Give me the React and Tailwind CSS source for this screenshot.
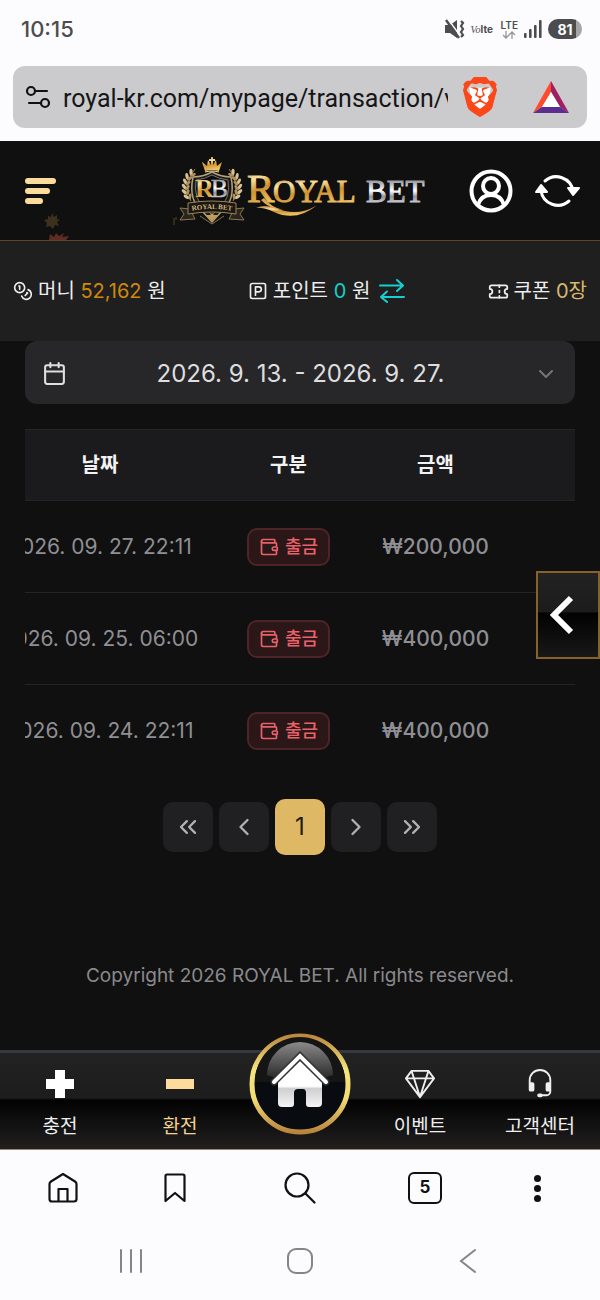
import React, { useState } from "react";
import {
  Bookmark,
  Calendar,
  ChevronDown,
  ChevronLeft,
  ChevronRight,
  ChevronsLeft,
  ChevronsRight,
  Coins,
  Search,
  SquareParking,
  Ticket,
  Wallet,
} from "lucide-react";
import { BsGem, BsHeadset } from "react-icons/bs";
import { SiBrave } from "react-icons/si";

const SANS = "font-['Inter','Noto_Sans_CJK_KR',sans-serif]";

const ROWS = [
  { date: "2026. 09. 27. 22:11", type: "출금", amount: "₩200,000" },
  { date: "2026. 09. 25. 06:00", type: "출금", amount: "₩400,000" },
  { date: "2026. 09. 24. 22:11", type: "출금", amount: "₩400,000" },
];

export default function App() {
  return (
    <div className={`flex min-h-screen flex-col bg-[#fcfcfe] ${SANS}`}>
      <StatusBar />
      <AddressBar />
      <div className="relative flex grow flex-col bg-[#101010]">
        <SiteHeader />
        <BalanceBar />
        <main className="px-[25px]">
          <DateRange />
          <Transactions />
          <Pager />
        </main>
        <footer className="mt-[107px] pb-14 text-center text-[19px] leading-7 text-[#8a8a8c]">
          Copyright 2026 ROYAL BET. All rights reserved.
        </footer>
        <SiteNav />
        <button
          aria-label="Open side panel"
          className="absolute top-[430px] right-0 flex h-[88px] w-16 items-center justify-center border-2 border-[#866228] bg-[linear-gradient(#222_0%,#1c1c1c_46%,#020202_48%,#181818_100%)] pr-3"
        >
          <svg viewBox="0 0 24 40" className="h-10 w-6" fill="none" stroke="#fff" strokeWidth="6">
            <path d="M21 3 4 20l17 17" />
          </svg>
        </button>
      </div>
      <BrowserNav />
      <SystemNav />
    </div>
  );
}

function StatusBar() {
  return (
    <div className="flex h-[66px] items-center justify-between pr-[18px] pb-2 pl-[21px] text-[#4c4c4e]">
      <span className="text-[22px] font-medium">10:15</span>
      <div className="flex items-center gap-[6px]">
        {/* muted + vibrate */}
        <svg viewBox="0 0 20 20" className="h-5 w-5" fill="currentColor">
          <path d="M0 6h5l7-5v18l-7-5H0z" />
          <path d="M3 0 16 18" stroke="#fcfcfe" strokeWidth="1.500" />
          <path d="m1 1 13 18" stroke="currentColor" strokeWidth="2.400" />
          <path d="m16 2 2 2-2 3 2 3-2 3 2 3-2 2" fill="none" stroke="currentColor" strokeWidth="2.200" />
        </svg>
        <span className="w-6 text-[10px] font-bold">
          <i className="font-['Liberation_Serif',serif] font-normal">Vo</i>lte
        </span>
        <div className="flex flex-col items-center">
          <span className="text-[10px] leading-[11px] font-semibold">LTE</span>
          <svg viewBox="0 0 14 8" className="h-2 w-[14px]" fill="none" stroke="#97979a" strokeWidth="1.300">
            <path d="M4 0v7M1 4l3 3 3-3M10 8V1M7 4l3-3 3 3" />
          </svg>
        </div>
        <svg viewBox="0 0 18 18" className="h-[18px] w-[18px]" fill="currentColor">
          <rect x="0" y="13" width="2.600" height="5" rx="1" />
          <rect x="5" y="9" width="2.600" height="9" rx="1" />
          <rect x="10" y="5" width="2.600" height="13" rx="1" />
          <rect x="15" y="0" width="2.600" height="18" rx="1" />
        </svg>
        <span className="flex h-5 w-[34px] items-center justify-center rounded-full bg-[linear-gradient(90deg,#4c4c4e_82%,#a5a5a8_82%)] text-[14px] font-bold text-white">
          81
        </span>
      </div>
    </div>
  );
}

function AddressBar() {
  return (
    <div className="mx-[13px] mb-[13px] flex h-[62px] items-center rounded-xl bg-[#cbcbcd] pr-[18px] pl-3">
      <svg viewBox="0 0 26 24" className="h-6 w-[26px] shrink-0" fill="none" stroke="#111" strokeWidth="2.200">
        <circle cx="6" cy="6" r="4" />
        <path d="M10 6h12M4 18h12" strokeLinecap="round" />
        <circle cx="20" cy="18" r="4" />
      </svg>
      <input
        aria-label="Address"
        defaultValue="royal-kr.com/mypage/transaction/v"
        className="ml-3 w-0 grow bg-transparent pt-[3px] font-['Roboto',sans-serif] text-[25px] text-[#161617] outline-none"
      />
      <button aria-label="Shields" className="ml-3 grid h-11 w-9 place-items-center">
        <svg viewBox="0 0 24 24" className="col-start-1 row-start-1 h-8 w-8" fill="#fff">
          <path d="M4 5h16l-2 12-6 5-6-5z" />
        </svg>
        <SiBrave className="col-start-1 row-start-1 h-10 w-10 text-[#fb4719]" />
      </button>
      <button aria-label="Rewards" className="ml-[37px]">
        <svg viewBox="0 0 36 32" className="h-8 w-9">
          <path d="M18 0 0 32l9-6 9-15z" fill="#ff4b2b" />
          <path d="M18 0v11l9 15 9 6z" fill="#9e1f63" />
          <path d="M0 32h36l-9-6H9z" fill="#5b2d90" />
          <path d="m18 11-9 15h18z" fill="#fff" />
        </svg>
      </button>
    </div>
  );
}

function SiteHeader() {
  return (
    <header className="relative grid h-[100px] grid-cols-[1fr_auto_1fr] items-center border-b border-[#5e4426] px-5">
      <button aria-label="Menu" className="ml-[5px] flex w-8 flex-col gap-1">
        <span className="h-[6px] w-[31px] rounded-full bg-[#fbdc9c]" />
        <span className="h-[6px] w-[25px] rounded-full bg-[#fbdc9c]" />
        <span className="h-[6px] w-[18px] rounded-full bg-[#fbdc9c]" />
      </button>
      <Logo />
      <div className="flex items-center justify-end gap-[21px]">
        <button aria-label="Account">
          <svg viewBox="0 0 44 44" className="h-11 w-11" fill="none" stroke="#fff" strokeWidth="4">
            <circle cx="22" cy="22" r="19.500" />
            <circle cx="22" cy="17" r="8" />
            <path d="M9 36c2-7 7-10 13-10s11 3 13 10" />
          </svg>
        </button>
        <button aria-label="Refresh">
          <svg viewBox="0 0 46 38" className="h-[38px] w-[46px]" fill="none" stroke="#fff" strokeWidth="3" strokeLinecap="round">
            <path d="M11 9a17 17 0 0 1 28 10M35 29A17 17 0 0 1 7 19" />
            <path d="m7 13-5 7h11zM39 23l-5-7h11z" fill="#fff" strokeWidth="2" strokeLinejoin="round" />
          </svg>
        </button>
      </div>
      {/* falling leaves */}
      <svg viewBox="0 0 30 27" className="absolute bottom-0 left-11 h-[27px] w-[30px]">
        <path d="m8 0 2 4 3-2v4l3 1-3 2 2 4-4-1-2 4-3-3-4 1 1-4-3-3 4-1V3l3 1z" fill="#3e301e" />
        <path d="m5 27 1-6 4 3 2-4 3 3 5-3-2 4 7-1-3 4z" fill="#602b23" />
      </svg>
    </header>
  );
}

// laurel leaves of the left side, mirrored for the right one
const LEAVES = [
  [20, 16, 35],
  [16, 20, 25],
  [14, 25, 10],
  [13, 30, 0],
  [13, 35, -12],
  [15, 40, -25],
];

function Laurel() {
  return (
    <g>
      <path d="M23 13Q11 27 19 45" fill="none" stroke="#9b7c45" strokeWidth="1" />
      {LEAVES.map(([x, y, r]) => (
        <g key={y} transform={`rotate(${r} ${x} ${y})`}>
          <ellipse cx={x - 1} cy={y} rx="1.600" ry="3.200" transform={`rotate(-35 ${x} ${y})`} fill="#d8c396" />
          <ellipse cx={x + 3} cy={y} rx="1.500" ry="3" transform={`rotate(35 ${x} ${y})`} fill="#b0935c" />
        </g>
      ))}
    </g>
  );
}

function Logo() {
  return (
    <a href="#home" aria-label="Royal Bet">
      <svg viewBox="0 -1 256 72" className="h-[72px] w-64 font-['Liberation_Serif',serif]">
        <defs>
          <linearGradient id="gold" x1="0" y1="0" x2="0.300" y2="1">
            <stop offset="0" stopColor="#a8742a" />
            <stop offset="0.350" stopColor="#fbe3a0" />
            <stop offset="0.600" stopColor="#d0932f" />
            <stop offset="1" stopColor="#f0c468" />
          </linearGradient>
          <linearGradient id="silver" x1="0" y1="0" x2="0" y2="1">
            <stop offset="0.200" stopColor="#9a9ba0" />
            <stop offset="0.480" stopColor="#ffffff" />
            <stop offset="0.650" stopColor="#94959a" />
            <stop offset="0.850" stopColor="#d6d7da" />
          </linearGradient>
        </defs>
        <Laurel />
        <g transform="translate(80 0) scale(-1 1)">
          <Laurel />
        </g>
        <path d="M21 21q10 0 19-5 9 5 19 5 5 24-10 35l-9 10-9-10q-15-11-10-35z" fill="#19191a" stroke="#b5a277" strokeWidth="1.500" />
        <path d="M24 24q9-1 16-5 7 4 16 5 3 20-10 29l-6 6-6-6q-13-9-10-29z" fill="#0d0d0e" stroke="#77736a" strokeWidth="1" />
        <path d="m33 15-3-9 5 4 1-6 3 5V5h-2V3h2V1h2v2h2v2h-2v4l3-5 1 6 5-4-3 9q-7-2-14 0z" fill="url(#gold)" />
        <path d="M33 16q7-2 14 0" fill="none" stroke="#f4dfa9" strokeWidth="1.200" />
        <text x="23" y="41" fontSize="26">
          <tspan fill="url(#gold)" fontWeight="bold">R</tspan>
          <tspan dx="-3" fill="url(#silver)" stroke="url(#silver)" strokeWidth="0.500">B</tspan>
        </text>
        <path d="M18 53 8 52l4 6-4 6 15-1zM62 53l10-1-4 6 4 6-15-1z" fill="#29251e" stroke="#8c7650" strokeWidth="1" />
        <path d="M16 47q24-4 48 0v11q-24-4-48 0z" fill="#1b1813" stroke="#9c8457" strokeWidth="1" />
        <path id="ribbon" d="M18 55q22-4 44 0" fill="none" />
        <text fontSize="7" fontWeight="bold" fill="#d3b980">
          <textPath href="#ribbon" startOffset="50%" textAnchor="middle">ROYAL BET</textPath>
        </text>
        <path d="m40 57 2 2 4 0-3 3-3 3-3-3-3-3h4z" fill="#c59c55" />
        <path d="m28 60 12 8 12-8" fill="none" stroke="#8a744d" strokeWidth="1" />
        <path d="M2 62v7M4 61v3" stroke="#594426" strokeWidth="1" />
        <g fill="url(#gold)" stroke="url(#gold)" strokeWidth="1">
          <text x="75" y="46" fontSize="41">R</text>
          <text x="101" y="46" fontSize="31">OYAL</text>
        </g>
        <text x="194" y="46" fontSize="31" fill="url(#silver)" stroke="url(#silver)" strokeWidth="1">BET</text>
        <path d="M84 52q8-4 19 0 22 9 41-2-20 16-42 6-11-5-18-4z" fill="url(#gold)" />
        <path d="M92 42q7 9 19 12-14-1-22-10z" fill="#dca64a" />
      </svg>
    </a>
  );
}

function BalanceBar() {
  return (
    <div className="flex h-[100px] items-center justify-between bg-[#1f1f1f] px-[13px] text-[20px] text-[#eee]">
      <div className="flex items-center gap-[5px]">
        <Coins size={20} strokeWidth={2} />
        <span>
          머니 <span className="text-[#cf880d]">52,162</span> 원
        </span>
      </div>
      <div className="flex items-center gap-[5px]">
        <SquareParking size={20} strokeWidth={2} />
        <span>
          포인트 <span className="text-[#17cfc9]">0</span> 원
        </span>
        <button aria-label="Convert points" className="ml-1">
          <svg viewBox="0 0 26 24" className="h-6 w-[26px]" fill="none" stroke="#17cfd0" strokeWidth="2" strokeLinecap="round" strokeLinejoin="round">
            <path d="M1 6.500h23M18 1l6 5.500-6 5.500M25 18H2M8 12.500 2 18l6 5" />
          </svg>
        </button>
      </div>
      <div className="flex items-center gap-[5px]">
        <Ticket size={21} strokeWidth={2} />
        <span>
          쿠폰 <span className="text-[#d9b96c]">0장</span>
        </span>
      </div>
    </div>
  );
}

function DateRange() {
  return (
    <button className="flex h-[63px] w-full items-center justify-between rounded-xl bg-[#27272a] px-[17px] pt-[2px] text-[24px] text-[#dededf]">
      <Calendar size={25} strokeWidth={2} />
      <span>2026. 9. 13. - 2026. 9. 27.</span>
      <ChevronDown size={24} strokeWidth={2} className="text-[#757578]" />
    </button>
  );
}

function Transactions() {
  return (
    <div className="mt-[25px] overflow-hidden">
      {/* scrolled a little to the right, the first column is cut off */}
      <table className="-ml-8 w-[calc(100%+32px)] table-fixed text-center whitespace-nowrap">
        <colgroup>
          <col className="w-[214px]" />
          <col className="w-[163px]" />
          <col className="w-[131px]" />
          <col />
        </colgroup>
        <thead>
          <tr className="h-[71px] border-y border-[#242427] bg-[#1b1b1d] text-[20px] text-[#f2f2f3]">
            <th className="font-bold">날짜</th>
            <th className="font-bold">구분</th>
            <th className="font-bold">금액</th>
            <td></td>
          </tr>
        </thead>
        <tbody className="text-[21px] text-[#8f8f94]">
          {ROWS.map((row) => (
            <tr key={row.date} className="h-[92px] border-b border-[#242426] last:border-b-0">
              <td>{row.date}</td>
              <td>
                <span className="inline-flex h-[38px] items-center gap-[6px] rounded-[10px] border-2 border-[#4d2529] bg-[#2b1618] px-[10px] align-middle text-[18px] font-medium text-[#e9626a]">
                  <Wallet size={20} strokeWidth={2} />
                  {row.type}
                </span>
              </td>
              <td className="font-medium">{row.amount}</td>
              <td></td>
            </tr>
          ))}
        </tbody>
      </table>
    </div>
  );
}

const PAGE_BUTTONS = [
  { label: "First page", icon: ChevronsLeft },
  { label: "Previous page", icon: ChevronLeft },
  { page: 1 },
  { label: "Next page", icon: ChevronRight },
  { label: "Last page", icon: ChevronsRight },
];

function Pager() {
  const [page, setPage] = useState(1);
  return (
    <nav className="mt-[22px] flex items-center justify-center gap-[6px]">
      {PAGE_BUTTONS.map((b) => {
        if (b.page) {
          return (
            <button
              key={b.page}
              onClick={() => setPage(b.page)}
              aria-current={page === b.page ? "page" : undefined}
              className="h-14 w-[50px] rounded-[10px] bg-[#dfb866] text-[24px] text-[#1f1a10]"
            >
              {b.page}
            </button>
          );
        }
        const Icon = b.icon;
        return (
          <button
            key={b.label}
            aria-label={b.label}
            className="flex h-[50px] w-[50px] items-center justify-center rounded-[10px] bg-[#202022] text-[#b1b1b3]"
          >
            <Icon size={28} strokeWidth={2} />
          </button>
        );
      })}
    </nav>
  );
}

function SiteNav() {
  const item = "flex flex-col items-center gap-[14px]";
  return (
    <nav className="relative mt-auto grid h-[100px] grid-cols-5 border-t-3 border-b border-t-[#363840] border-b-[#9c8572] bg-[linear-gradient(#222_0%,#1d1d1d_47%,#020202_49%,#121212_75%,#221e1d_100%)] pt-4 text-[19px] leading-7 text-[#efefef]">
      <a href="#deposit" className={item}>
        <svg viewBox="0 0 30 30" className="h-[30px] w-[30px]" fill="#fff">
          <path d="M10 1h10v9h9v10h-9v9H10v-9H1V10h9z" />
        </svg>
        충전
      </a>
      <a href="#withdraw" className={`${item} text-[#f3d28f]`}>
        <svg viewBox="0 0 30 30" className="h-[30px] w-[30px]" fill="#fbdc9c">
          <path d="M1 10h28v10H1z" />
        </svg>
        환전
      </a>
      <a href="#home" aria-label="Home" className="flex justify-center">
        <HomeBadge />
      </a>
      <a href="#event" className={item}>
        <BsGem className="h-[30px] w-[30px]" />
        이벤트
      </a>
      <a href="#support" className={item}>
        <BsHeadset className="h-[30px] w-[30px]" />
        고객센터
      </a>
    </nav>
  );
}

function HomeBadge() {
  return (
    <svg viewBox="0 0 102 102" className="-mt-9 h-[102px] w-[102px] shrink-0">
      <defs>
        <linearGradient id="ring" x1="0" y1="0" x2="0" y2="1">
          <stop offset="0" stopColor="#bd893e" />
          <stop offset="0.350" stopColor="#f5e47c" />
          <stop offset="0.650" stopColor="#f3dc74" />
          <stop offset="1" stopColor="#b9853c" />
        </linearGradient>
        <linearGradient id="gloss" x1="0" y1="0" x2="0" y2="1">
          <stop offset="0" stopColor="#8a8a8a" />
          <stop offset="1" stopColor="#222" />
        </linearGradient>
        <linearGradient id="house" x1="0" y1="0" x2="0" y2="1">
          <stop offset="0.550" stopColor="#fff" />
          <stop offset="0.600" stopColor="#cfcfd1" />
          <stop offset="1" stopColor="#f4f4f4" />
        </linearGradient>
      </defs>
      <circle cx="51" cy="51" r="48" fill="#080b10" stroke="url(#ring)" strokeWidth="5" />
      <path d="M6 49a45 45 0 0 1 90 0z" fill="#151515" />
      <path d="M18 42a33 33 0 0 1 66 0q-33 12-66 0z" fill="url(#gloss)" />
      <path d="M51 28 29 49v21q0 4 4 4h9q3 0 3-3V60q0-4 4-4h5q3 0 3 4v11q0 3 3 3h9q4 0 4-4V49z" fill="url(#house)" />
      <path d="m25 49 26-26 26 26" fill="none" stroke="#333" strokeWidth="7" strokeLinecap="round" />
      <path d="m25 49 26-26 26 26" fill="none" stroke="#fff" strokeWidth="4" strokeLinecap="round" />
    </svg>
  );
}

function BrowserNav() {
  return (
    <nav className="flex h-[76px] items-center justify-between px-[46px] text-[#111]">
      <button aria-label="Browser home" className="flex w-[34px] justify-center">
        <svg viewBox="0 0 30 30" className="h-[30px] w-[30px]" fill="none" stroke="currentColor" strokeWidth="2.200" strokeLinejoin="round">
          <path d="M1.500 11Q1.500 9.500 3 8.500L15 1l12 7.500q1.500 1 1.500 2.500v15q0 2.500-2.500 2.500H4Q1.500 28.500 1.500 26z" />
          <path d="M10.500 28V16h9v12" />
        </svg>
      </button>
      <button aria-label="Bookmarks" className="flex w-[34px] justify-center">
        <svg viewBox="0 0 22 30" className="h-[30px] w-[22px]" fill="none" stroke="currentColor" strokeWidth="2.200" strokeLinejoin="round">
          <path d="M1.500 3q0-1.500 1.500-1.500h16q1.500 0 1.500 1.500v25L11 20l-9.500 8z" />
        </svg>
      </button>
      <button aria-label="Search" className="flex w-[60px] justify-center">
        <svg viewBox="0 0 32 32" className="h-8 w-8" fill="none" stroke="currentColor" strokeWidth="2.200" strokeLinecap="round">
          <circle cx="13" cy="13" r="11.500" />
          <path d="m21.500 21.500 9 9" />
        </svg>
      </button>
      <button className="flex h-8 w-[34px] items-center justify-center rounded-[6px] border-2 border-[#111] text-[17px] font-bold">
        5
      </button>
      <button aria-label="Browser menu" className="flex w-[34px] flex-col items-center gap-[3px]">
        <span className="h-[7px] w-[7px] rounded-full bg-[#111]" />
        <span className="h-[7px] w-[7px] rounded-full bg-[#111]" />
        <span className="h-[7px] w-[7px] rounded-full bg-[#111]" />
      </button>
    </nav>
  );
}

function SystemNav() {
  return (
    <nav className="flex h-[74px] items-center justify-between px-[118px] pb-1 text-[#858588]">
      <button aria-label="Recent apps">
        <svg viewBox="0 0 28 26" className="h-[26px] w-7" stroke="currentColor" strokeWidth="2" strokeLinecap="round">
          <path d="M3 2v22M13 2v22M23 2v22" />
        </svg>
      </button>
      <button aria-label="System home" className="h-[26px] w-[26px] rounded-[9px] border-2 border-[#858588]" />
      <button aria-label="Back">
        <svg viewBox="0 0 28 26" className="h-[26px] w-7" fill="none" stroke="currentColor" strokeWidth="2" strokeLinecap="round">
          <path d="M21 2 7 13l14 11" />
        </svg>
      </button>
    </nav>
  );
}
